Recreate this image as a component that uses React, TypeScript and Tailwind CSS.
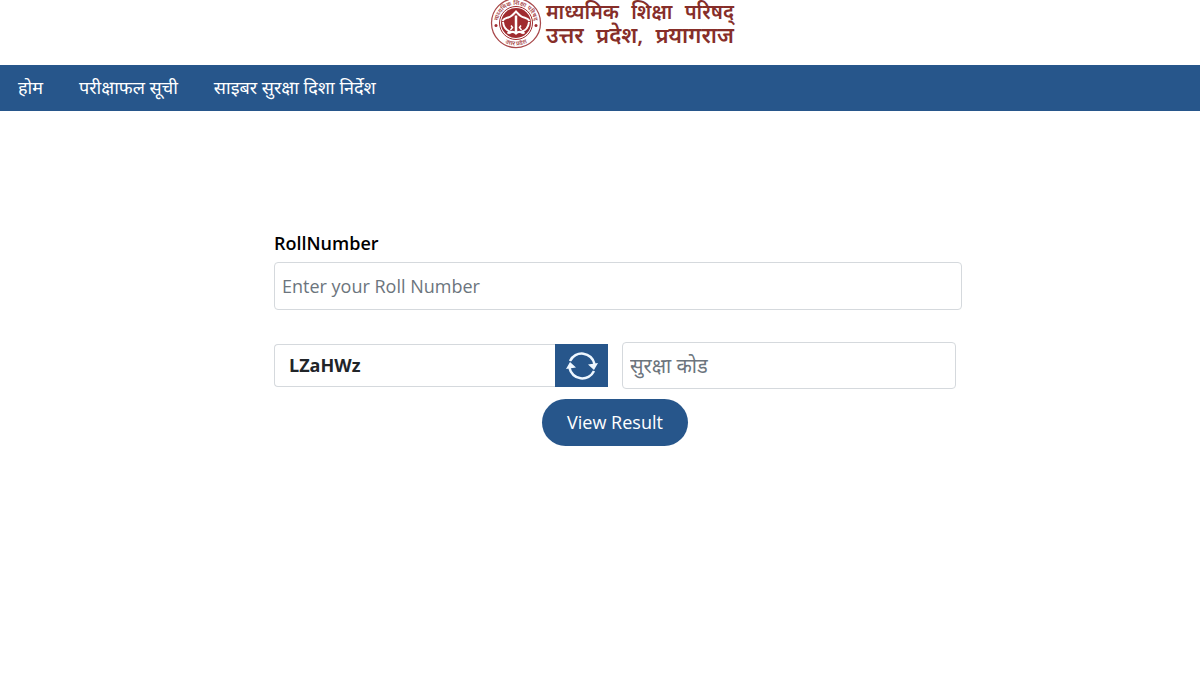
import React, { useState } from 'react';

const NAV_LINKS = ['होम', 'परीक्षाफल सूची', 'साइबर सुरक्षा दिशा निर्देश'];

// Round board emblem: ring with lettering, bow at the top and two fish below it
const Emblem = () => (
  <svg className="w-[52px] h-[52px] shrink-0" viewBox="0 0 104 104" fill="none" aria-hidden="true">
    <defs>
      <path id="ring-top" d="M16 52a36 36 0 0 1 72 0" />
      <path id="ring-bottom" d="M7 52a45 45 0 0 0 90 0" />
    </defs>
    <circle cx="52" cy="52" r="49" stroke="#a8484a" strokeWidth="2.5" />
    <circle cx="52" cy="52" r="33" stroke="#a02c30" strokeWidth="2" />
    <g fill="#a8484a" fontSize="12" fontWeight="600" textAnchor="middle">
      <text><textPath href="#ring-top" startOffset="50%">माध्यमिक शिक्षा परिषद्</textPath></text>
      <text><textPath href="#ring-bottom" startOffset="50%">उत्तर प्रदेश</textPath></text>
    </g>
    <circle cx="12" cy="57" r="3" fill="#a02c30" />
    <circle cx="92" cy="57" r="3" fill="#a02c30" />
    <circle cx="52" cy="52" r="30" fill="#a02c30" />
    <path d="M25 48c4-8 10-5 16-9 5-3 7-6 11-10 4 4 6 7 11 10 6 4 12 1 16 9" stroke="#fff" strokeWidth="4" />
    <path d="M52 37v36" stroke="#fff" strokeWidth="5" />
    <path d="M26 50c1 9 5 16 14 19l-5 4M78 50c-1 9-5 16-14 19l5 4" stroke="#fff" strokeWidth="4" />
    <path d="M38 73c6-5 10-4 14 0 4-4 8-5 14 0" stroke="#fff" strokeWidth="4" />
    <path d="M41 66l4-5-3-4M63 66l-4-5 3-4" stroke="#fff" strokeWidth="3" />
  </svg>
);

const RefreshIcon = () => (
  <svg className="w-8 h-8" viewBox="0 0 32 32" fill="none" aria-hidden="true">
    <path d="M4 11A13 13 0 0 1 28.500 14M28 21A13 13 0 0 1 3.500 18" stroke="#eef7ff" strokeWidth="2.5" />
    <path d="M22 14.500l10-1.500-4 7zM10 17.500l-10 1.500 4-7z" fill="#eef7ff" />
  </svg>
);

export default function App() {
  const [rollNumber, setRollNumber] = useState('');
  const [code, setCode] = useState('');

  return (
    <div className="min-h-screen bg-white text-[#212529] font-['Open_Sans','Noto_Sans',sans-serif]">
      {/* Header */}
      <header className="h-[65px] flex justify-center items-start pl-6">
        <div className="flex items-start gap-1 -mt-[3px]">
          <Emblem />
          <h1 className="w-[188px] pt-1 leading-[22px] font-semibold text-[#862e29]">
            <span className="flex justify-between text-[20px]">
              <span>माध्यमिक</span> <span>शिक्षा</span> <span>परिषद्</span>
            </span>
            <span className="flex justify-between text-[22px]">
              <span>उत्तर</span> <span>प्रदेश,</span> <span>प्रयागराज</span>
            </span>
          </h1>
        </div>
      </header>

      {/* Navigation */}
      <nav className="bg-[#27568b] h-[46px] flex items-center gap-9 px-[18px] pb-[3px]">
        {NAV_LINKS.map(link => (
          <a key={link} href="#" className="text-[18px] leading-6 text-white">{link}</a>
        ))}
      </nav>

      {/* Result form */}
      <main className="pl-9 pt-[120px]">
        <form className="max-w-[688px] mx-auto" onSubmit={e => e.preventDefault()}>
          <label htmlFor="roll" className="block text-[18px] leading-6 mb-[7px] font-semibold text-black">
            RollNumber
          </label>
          <input
            id="roll"
            type="text"
            placeholder="Enter your Roll Number"
            className="block w-full h-12 px-[7px] text-[18px] rounded border border-[#d5d9dd] placeholder-[#6c757d]"
            value={rollNumber}
            onChange={e => setRollNumber(e.target.value)}
          />

          <div className="grid grid-cols-2 items-center gap-[14px] mt-8 pr-[6px]">
            <div className="flex h-[43px]">
              <div className="flex-1 flex items-center pl-[14px] text-[18px] font-bold rounded-l border border-r-0 border-[#d5d9dd]">
                LZaHWz
              </div>
              <button type="button" aria-label="Refresh code" className="w-[53px] flex items-center justify-center bg-[#27568b]">
                <RefreshIcon />
              </button>
            </div>
            <input
              type="text"
              aria-label="सुरक्षा कोड"
              placeholder="सुरक्षा कोड"
              className="w-full h-[47px] px-[7px] text-[20px] rounded border border-[#d5d9dd] placeholder-[#6c757d]"
              value={code}
              onChange={e => setCode(e.target.value)}
            />
          </div>

          <div className="flex justify-center mt-[10px] pr-[6px]">
            <button type="submit" className="h-[47px] px-[25px] rounded-full bg-[#27568b] text-[18px] text-white">
              View Result
            </button>
          </div>
        </form>
      </main>
    </div>
  );
}
